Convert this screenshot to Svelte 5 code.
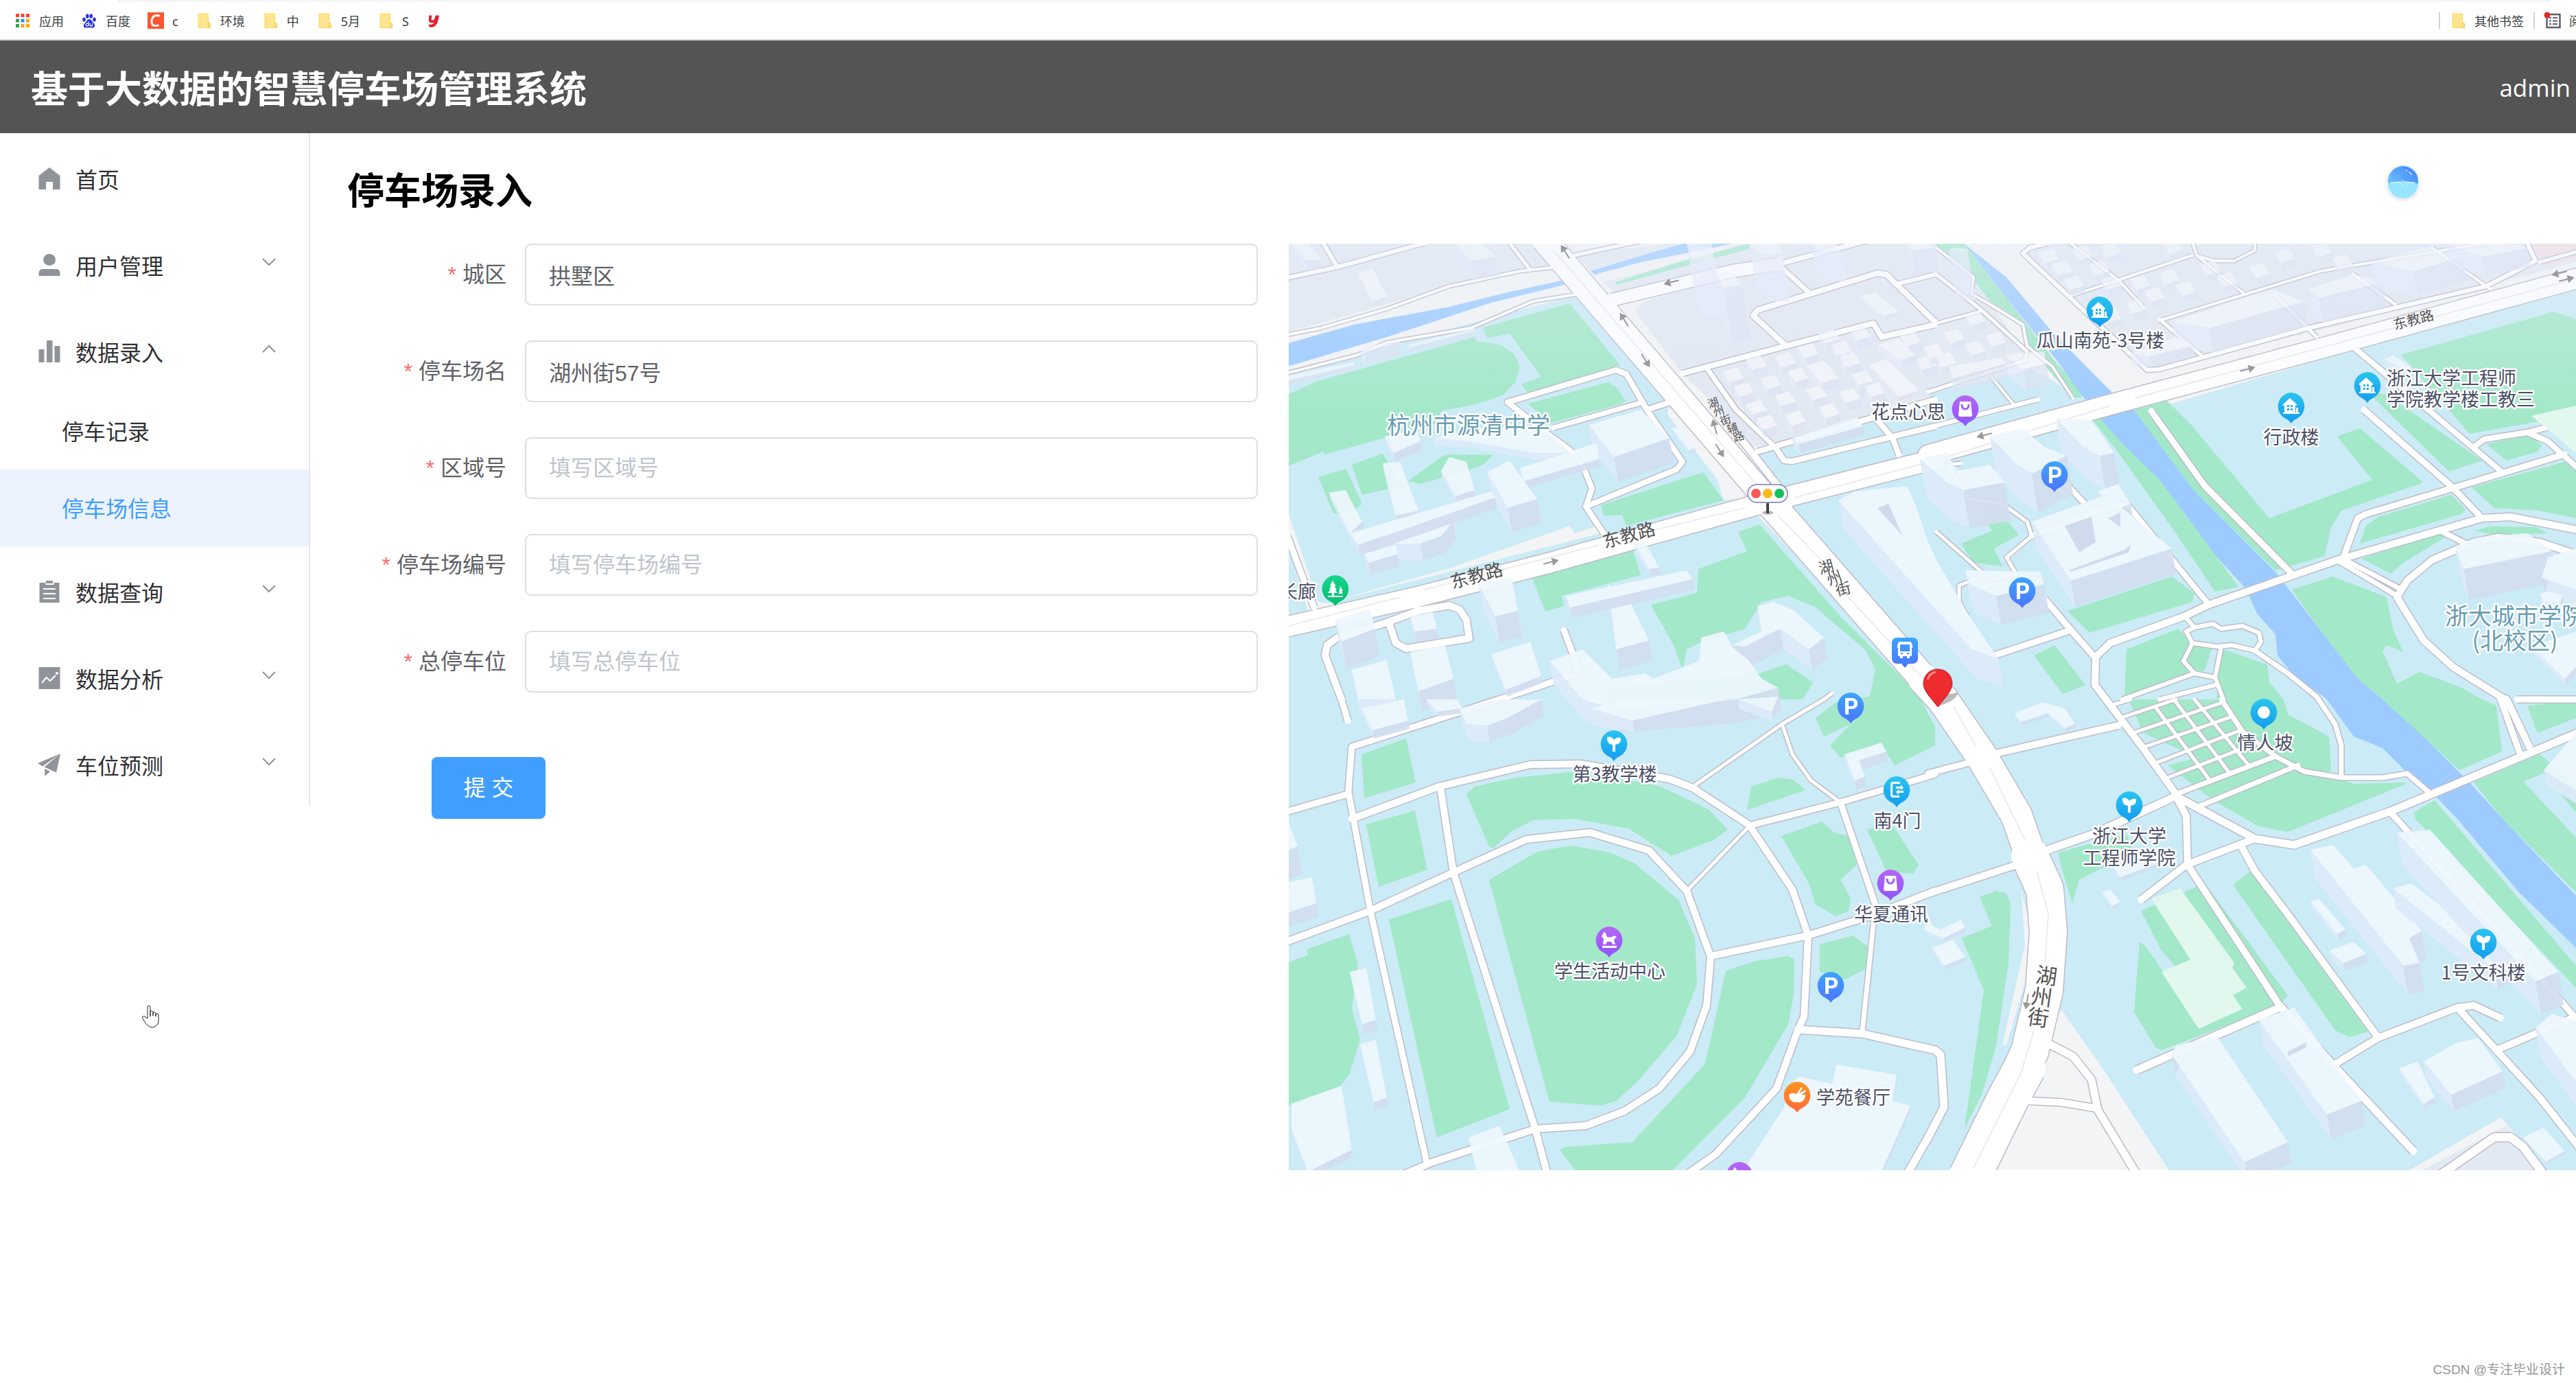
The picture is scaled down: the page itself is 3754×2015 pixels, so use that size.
<script>
  const bookmarks = [
    { icon: 'apps', label: '应用' },
    { icon: 'baidu', label: '百度' },
    { icon: 'csdn', label: 'c' },
    { icon: 'folder', label: '环境' },
    { icon: 'folder', label: '中' },
    { icon: 'folder', label: '5月' },
    { icon: 'folder', label: 'S' },
    { icon: 'youdao', label: '' },
  ];

  const menu = [
    { icon: 'home', label: '首页' },
    { icon: 'user', label: '用户管理', group: true },
    { icon: 'bars', label: '数据录入', group: true, open: true, children: ['停车记录', '停车场信息'] },
    { icon: 'order', label: '数据查询', group: true },
    { icon: 'trend', label: '数据分析', group: true },
    { icon: 'plane', label: '车位预测', group: true },
  ];
  const current = '停车场信息';

  const fields = [
    { id: 'district', label: '城区', value: '拱墅区', hint: '填写城区' },
    { id: 'name', label: '停车场名', value: '湖州街57号', hint: '填写停车场名' },
    { id: 'area', label: '区域号', value: '', hint: '填写区域号' },
    { id: 'code', label: '停车场编号', value: '', hint: '填写停车场编号' },
    { id: 'total', label: '总停车位', value: '', hint: '填写总停车位' },
  ];

  // The map is surveyed on four sheets, each with its own origin and scale.
  const sheets = {
    nw: [-8, -16, 1.6505, 2.306],
    ne: [932, -16, 1.661, 2.306],
    sw: [-8, 664, 1.6505, 2.24],
    se: [932, 664, 1.661, 2.24],
  };
  function points(text) {
    let s = sheets.nw;
    const out = [];
    for (const word of text.trim().split(/\s+/)) {
      if (sheets[word]) { s = sheets[word]; continue; }
      const [x, y] = word.split(',').map(Number);
      out.push([Math.round(s[0] + x / s[2]), Math.round(s[1] + y / s[3])]);
    }
    return out;
  }
  const join = (list) => list.map((p) => p.join(',')).join(' ');
  const line = (text) => join(points(text));
  const at = (text) => 'translate(' + points(text)[0].join(' ') + ')';

  const land = [
    'nw 0,30 ne 1568,30 1568,190 1040,390 590,575 330,560 nw 1568,590 1140,735 1180,850 1110,890 1060,900 1045,830 925,610 930,560 720,205 0,470',
    'nw 0,890 85,1240 130,1250 60,1270 0,1000',
    'nw 405,1125 690,985 700,1010 760,985 765,1010 400,1140 100,1245',
    'se 320,1010 415,1190 585,1540 160,1540 250,1300',
    'se 1160,1540 1385,1365 1500,1540',
    'nw 1140,950 1160,945 1568,1540 1568,1568',
    'se 225,620 250,760 240,900 190,1130 180,1130 235,800',
  ].map(line);
  const blocks = [
    'nw 0,30 620,30 650,105 400,180 0,340',
    'nw 845,260 870,230 1200,100 1568,30 ne 30,35 110,150 240,420 0,530 nw 1568,545 1180,710 1130,720 1010,540 960,475',
    'nw 700,70 960,35 740,130',
    'nw 770,165 960,100 1100,40 1568,30 1200,100 800,205',
    'ne 230,70 245,35 1568,35 1568,100 1330,185 940,330 560,455 520,455',
    'se 1190,1540 1400,1390 1480,1540',
  ].map(line);
  const campus = ['nw 1130,740 1568,575 ne 0,540 250,460 380,560 0,700 nw 1568,700 1200,850'].map(line);
  const greens = [
    'nw 0,550 80,500 460,350 465,365 520,375 555,405 570,450 560,500 530,545 470,575 380,600 370,640 100,745 95,735 0,790',
    'nw 480,318 690,237 810,445 590,540 572,510 620,485 545,340 490,355',
    'nw 590,575 780,502 800,520 823,565 815,575 640,640',
    'nw 85,820 150,793 190,910 170,935 150,950 120,940',
    'nw 165,780 240,742 285,850 190,880',
    'nw 300,835 380,755 400,745 505,748 480,780 450,795 330,845',
    'nw 765,915 1010,805 1060,900 825,985 815,950 770,950',
    'nw 598,1155 840,1060 860,1150 670,1220 675,1255 630,1273',
    'nw 1095,1005 1145,980 1340,1290 1540,1568 1410,1568 1425,1470 1400,1400 1330,1320 1280,1260 1215,1220 1150,1240 1110,1330 1000,1380 970,1400 960,1470 940,1390 885,1250 995,1210 998,1130 1115,1070',
    'nw 1145,1480 1210,1450 1275,1510 1250,1568 780,1568 790,1530',
    'nw 1410,1560 1530,1560 sw 1568,90 1568,150 1470,215 1440,150 1340,190 1315,150 1365,80 1300,120 1280,60 1330,10',
    'nw 800,165 960,95 1120,38 1120,55 970,110 800,175',
    'ne 0,40 85,35 190,220 300,420 380,550 350,555 240,380 220,290 150,230 100,140',
    'ne 395,625 420,620 560,830 700,1090 750,1190 695,1205 600,1010 450,720',
    'ne 490,600 575,560 640,650 825,960 1075,830 990,685 1045,658 1200,840 1000,935 975,990 960,1085 840,1135 640,860',
    'ne 1145,410 1515,265 1568,290 1568,610 1310,675',
    'ne 1060,530 1110,545 1340,765 1260,802',
    'ne 1350,710 1460,680 1485,715 1475,735 1400,765',
    'ne 1315,855 1540,770 1568,800 1568,960 1480,935 1370,925',
    'ne 1045,1045 1060,985 1090,955 1265,880 1300,930 1290,945',
    'ne 1050,1095 1235,1010 1250,1025 1150,1110 1120,1145',
    'ne 1320,1000 1360,988 1470,990 1500,1010 1370,1015',
    'ne 880,1200 980,1155 1110,1225 1125,1330 1150,1410 1110,1385 1100,1405 1135,1515 1190,1475 1290,1530 1340,1568 se 1375,20 1388,170 1285,230 1100,0 ne 1040,1500 940,1320',
    'ne 80,1045 155,1000 130,950 165,925 220,1015 160,1060 180,1120 110,1110',
    'ne 338,1270 590,1155 645,1210 640,1240 390,1345',
    'ne 255,1420 305,1385 380,1520 325,1550',
    'ne 480,1400 605,1330 640,1380 690,1385 670,1470 620,1500 475,1568',
    'ne 715,1400 820,1450 825,1510 860,1568 se 870,50 970,120 975,235 920,235 760,110 700,0 ne 700,1500',
    'se 485,0 700,0 840,190 1030,275 1160,270 1150,280 870,432 800,415 690,330 580,215 655,190 520,110',
    'se 315,500 480,440 495,500 365,590 348,665 320,540',
    'se 125,645 165,625 190,635 200,660 195,860 165,1130 130,1290 88,1400 135,950 82,780 155,740',
    'se 515,690 670,600 870,965 850,1000 565,1145 550,1135 498,1020 512,790 580,860',
    'se 738,605 780,560 1065,1085 1020,1103 985,1080',
    'se 1175,370 1225,330 1568,870 1568,940 1180,390',
    'se 1320,270 1480,180 1568,280 1568,630 1390,390',
    'se 1450,20 1568,5 1568,60 1475,110',
    'sw 188,180 295,128 318,270 195,322',
    'sw 200,408 317,362 346,555 230,612',
    'sw 255,720 405,652 545,1338 370,1430',
    'sw 0,865 60,835 58,815 158,765 180,865 165,1010 185,1110 160,1220 135,1265 0,1330',
    'sw 495,590 610,498 690,478 780,498 845,535 950,655 990,780 995,930 945,1100 850,1250 800,1310 765,1327 640,1312',
    'sw 440,310 460,285 560,255 690,238 830,265 905,283 1025,360 1070,425 1035,460 935,510 830,420 700,390 600,395 550,430 505,487 495,480',
    'sw 1115,360 1125,285 1190,255 1225,262 1258,295',
    'sw 1198,445 1295,398 1325,435 1360,445 1380,540 1340,590 1365,650 1360,690 1330,708 1280,670 1265,600',
    'sw 1405,425 1460,400 1528,540 1515,570 1450,560',
    'sw 1290,800 1370,770 1412,810 1400,880 1350,915 1290,890',
    'sw 1065,888 1130,855 1215,838 1230,850 1228,960 1215,1060 1110,1300 935,1540 705,1540 665,1470 680,1460 840,1445 1015,1190',
  ].map(line);
  const clearings = ['se 1440,268 1490,240 1568,370 1568,450', 'se 512,780 525,760 605,880 570,890'].map(line);
  const pales = [
    'se 540,650 610,615 740,860 735,875 770,940 738,965 760,1010 655,1075 565,890 635,850',
    'ne 1460,615 1568,580 1568,740',
  ].map(line);
  const waters = [
    'nw 0,375 170,310 400,250 540,200 690,155 690,170 500,235 250,350 0,455',
    'nw 740,130 880,70 960,38 1090,35 1000,60 860,100 750,140',
    'ne 85,35 190,150 300,335 450,545 500,600 640,860 840,1140 940,1320 1040,1500 1100,1568 se 1190,110 1310,270 1390,390 1568,640 1568,810 1430,630 1280,390 1210,290 1160,240 1100,160 1030,120 965,0 ne 880,1480 845,1420 840,1350 795,1280 770,1200 700,1090 560,830 470,710 390,580 310,430 190,220 100,60',
  ].map(line);

  const roads = [
    [36, 'nw 625,20 1165,900'],
    [41, 'nw 1165,900 1540,1500 se 35,0'],
    [45, 'nw 1540,1500 se 35,0 130,185 215,380 248,510'],
    [54, 'se 245,510 282,620 290,760 280,950 245,1150 195,1300'],
    [60, 'se 235,1200 195,1300 100,1560'],
    [29, 'nw -20,1332 320,1225 640,1110 1165,905 1568,760 ne 0,748 450,575 960,385 1580,150'],
    [18, 'nw 790,225 1080,130 1190,105'],
    [8, 'nw 770,1010 728,920 742,860 720,780 690,730 620,660 540,570 800,462 825,475 875,595 960,770 945,795 728,920'],
    [8, 'nw 875,595 940,565'],
    [7, 'nw 650,655 865,570'],
    [4, 'nw 0,345 90,320 250,255 400,180 570,130 660,115'],
    [4, 'nw 0,475 180,410 250,370 450,320 600,230 715,205'],
    [6, 'nw 0,155 130,115 340,35'],
    [6, 'nw 95,35 130,115'],
    [5, 'nw 545,35 595,125'],
    [8, 'nw 960,472 1210,380 1420,305 1440,350 1568,310'],
    [8, 'nw 1210,380 1130,280 1140,260 1430,135 1450,140 1568,300'],
    [7, 'nw 1190,105 1265,200'],
    [7, 'nw 1190,105 1420,20'],
    [6, 'nw 1480,170 1568,140'],
    [5, 'nw 700,75 870,25'],
    [7, 'nw 1018,455 1090,595 1175,710'],
    [8, 'nw 1140,735 1568,560'],
    [10, 'nw 1100,690 1190,850'],
    [8, 'nw 1185,725 1205,765 1225,768 1568,650'],
    [8, 'nw 1420,615 1465,690 1480,745'],
    [9, 'nw 10,1020 75,1260'],
    [10, 'nw 140,1568 100,1420 105,1385 130,1360 250,1310 325,1270 400,1253 425,1265 440,1300 448,1362 295,1398 270,1380 255,1310'],
    [10, 'nw 315,1235 325,1270'],
    [9, 'nw 675,1335 712,1470 700,1485 520,1568 sw 165,155 157,300 210,690 345,1510'],
    [9, 'nw 140,1568 sw 155,70'],
    [9, 'sw 0,370 155,308'],
    [10, 'sw 165,390 375,285 595,212 715,210 930,260 985,290 1120,410 1225,620 1262,770 1252,1035 1238,1080 1187,1270 1040,1485 975,1545'],
    [10, 'sw 378,285 410,565 605,1400 635,1550'],
    [10, 'sw -10,800 210,690 410,565 585,458 737,435 880,492 970,625 1028,840 1018,1000 978,1150 905,1270 820,1345 728,1390 605,1402 360,1510 290,1550'],
    [5, 'sw 970,625 1120,415'],
    [9, 'sw 1120,412 1340,335 1568,245 se 0,243 100,205'],
    [5, 'sw 985,285 1200,80 1300,0 nw 1320,1548'],
    [5, 'sw 1200,80 1225,180 1270,265 1340,335'],
    [9, 'sw 1340,335 1425,670'],
    [7, 'sw 1425,670 1393,1085'],
    [10, 'sw 1028,838 1262,770 1425,700 1568,625 se 0,635 215,540'],
    [11, 'sw 1238,1078 1393,1090 1568,1145 se 30,1160 38,1330 0,1430 sw 1500,1550'],
    [10, 'se 170,175 460,85'],
    [10, 'ne 405,1425 403,1520 430,1568 se 520,160 600,310'],
    [8, 'ne 680,1250 480,910 400,940 250,1020'],
    [8, 'ne 330,840 400,940'],
    [5, 'ne 20,1005 150,1165 215,1150 190,1090 250,1020 240,970 180,910 100,895 60,810 50,780 80,775'],
    [5, 'ne 130,1155 75,1185 75,1240 95,1290'],
    [9, 'ne 150,1425 345,1335'],
    [9, 'ne 280,1230 345,1335 405,1430'],
    [10, 'ne 405,1425 440,1380 620,1290 680,1250 990,1100 1340,960 1410,955 1580,1000'],
    [9, 'ne 880,1145 670,850 540,600'],
    [9, 'ne 1005,1090 1040,960 1060,945 1270,858 1540,745'],
    [9, 'ne 1055,595 1270,858 1340,960'],
    [8, 'ne 1030,385 1215,600 1385,800'],
    [8, 'ne 1325,715 1345,695 1450,670 1580,625'],
    [8, 'ne 1450,670 1500,700 1580,800'],
    [8, 'ne 1245,1005 1300,1045'],
    [10, 'ne 1580,1085 1480,1040 1380,1025 1320,1040 1220,1100 1160,1170 1135,1225 1200,1370 1270,1460 1385,1560 1400,1568 se 1455,155'],
    [7, 'ne 995,1105 1135,1220'],
    [7, 'ne 1010,1100 1140,1195'],
    [6, 'ne 625,1295 645,1325 690,1315 710,1330 760,1322 800,1345 805,1375 790,1405 735,1385 700,1390 640,1380 625,1340 645,1325'],
    [6, 'ne 640,1380 618,1440 645,1480 695,1495 710,1390'],
    [6, 'ne 695,1495 715,1568'],
    [6, 'ne 645,1480 470,1568'],
    [6, 'ne 695,1520 560,1568'],
    [7, 'ne 790,1405 870,1480 940,1560 se 985,80 1000,150 1000,250'],
    [7, 'se 1210,300 1160,243 1100,255 1000,255 910,235 840,185 760,105 710,0'],
    [7, 'se 600,310 840,185'],
    [7, 'se 655,350 895,215'],
    [5, 'se 440,20 490,0'], [5, 'se 465,60 600,0'], [5, 'se 495,110 715,10'], [5, 'se 525,155 735,55'],
    [5, 'se 545,210 755,100'], [5, 'se 580,255 780,150'], [5, 'se 550,25 680,260'], [5, 'se 595,0 730,240'], [5, 'se 645,0 775,215'],
    [11, 'se 280,495 400,440 600,315 790,455 885,475 1120,365 1580,105'],
    [10, 'se 600,315 625,380 628,540 850,1000'],
    [10, 'se 515,655 625,540 790,455'],
    [11, 'se 850,1000 980,1195 1175,1475'],
    [11, 'se 505,1210 850,1005'],
    [10, 'se 760,485 790,560 870,700 1090,1105'],
    [10, 'se 980,1195 1090,1105 1280,1005 1320,1000 1385,1040'],
    [10, 'se 1280,1005 1375,1145 1480,1300 1580,1470'],
    [10, 'se 1375,1145 1568,1035'],
    [9, 'se 1120,370 1470,890 1580,1060'],
    [9, 'se 1385,0 1432,175'],
    [9, 'se 1425,0 1580,0'],
    [11, 'se 285,1120 350,1165 395,1240 410,1340 505,1550'],
    [10, 'se 245,1310 320,1315 410,1335'],
    [12, 'se 1240,1550 1370,1430 1410,1430 1440,1460 1490,1550'],
    [6, 'ne 290,35 245,50 230,70 340,215 530,462 560,460 920,320 1350,180 1470,95 1450,35'],
    [4, 'ne 340,215 460,160 640,75'],
    [4, 'ne 330,20 460,160 520,250'],
    [4, 'ne 640,30 650,75 690,95 740,95 790,60 790,20'],
    [6, 'ne 0,655 265,560'],
    [5, 'ne 0,535 235,430 240,400 130,260 20,140'],
    [4, 'ne 20,305 130,262'],
    [4, 'ne 20,50 110,150 105,205 160,250 230,310 240,380 300,450 350,555'],
    [5, 'ne 560,290 660,410'], [4, 'ne 650,75 760,200'], [5, 'ne 840,210 940,350'], [5, 'ne 1030,140 1130,240'],
    [4, 'ne 1220,50 1360,190'], [4, 'ne 560,295 950,130 1350,35'], [4, 'ne 150,480 210,580'], [5, 'ne 1480,100 1580,60'],
  ].map(([w, p]) => ({ w, d: line(p) }));
  const centres = [
    'nw 650,60 1150,865',
    'nw 1190,950 1300,1110', 'nw 1350,1210 1540,1500',
    'se 60,20 115,150', 'se 150,225 235,460', 'se 262,560 290,700 282,860', 'se 255,1080 225,1220 110,1530',
    'nw 0,1325 280,1225', 'nw 340,1200 760,1050', 'nw 860,1010 1110,925', 'nw 1230,890 1568,765 ne 440,580', 'ne 500,555 1568,155',
  ].map(line);

  const house = (sheet, x, y) =>
    `${sheet} ${x - 22},${y - 14} ${x + 12},${y - 28} ${x + 28},${y + 8} ${x - 6},${y + 22}`;
  const homes = [
    ...[[1080,480],[1105,530],[1135,590],[1160,640],[1135,440],[1170,505],[1205,560],[1230,625],[1205,430],[1235,480],[1260,400],[1310,350],[1340,390],[1360,430],[1385,340],[1390,490],[1420,530],[1360,550],[1280,540],[1310,600],[1505,360],[1545,440]].map(([x, y]) => [12, house('nw', x, y)]),
    ...[[290,80],[320,120],[350,170],[370,70],[410,120],[440,170],[440,60],[510,170],[545,210],[500,250],[580,150],[620,190],[590,50],[680,120],[720,160],[800,130],[860,80],[950,60],[1000,100],[110,290],[60,350],[110,390],[10,400],[40,430],[160,360],[440,280]].map(([x, y]) => [10, house('ne', x, y)]),
  ];
  function extrude([drop, text], far = false) {
    const roof = points(text);
    const lean = Math.round(drop / 6);
    const walls = roof.map((a, i) => {
      const b = roof[(i + 1) % roof.length];
      const slope = (b[0] - a[0]) * (b[1] - a[1]);
      return { dark: slope < 0, d: join([a, b, [b[0] + lean, b[1] + drop], [a[0] + lean, a[1] + drop]]) };
    });
    return { roof: join(roof), walls, far };
  }
  const buildings = [
    ...homes.map((b) => extrude(b, true)),
    ...[
      [80, 'nw 1035,115 1085,140 1105,175 1060,185'], [85, 'nw 970,35 1030,35 1035,90 985,90'],
      [70, 'nw 1120,35 1190,35 1200,70 1150,70'], [45, 'nw 1270,35 1330,35 1340,60 1290,60'],
      [35, 'nw 1500,35 1568,35 1568,50 1510,60'], [28, 'nw 415,35 480,35 510,80 450,95'],
      [5, 'nw 180,135 215,120 250,215 215,230'], [14, 'nw 20,35 60,35 90,90 55,95'],
      [6, 'nw 1385,215 1425,200 1480,265 1445,280'], [18, 'nw 185,390 270,360 280,370 195,400'],
      [7, 'nw 300,375 460,320 460,330 305,385'], [7, 'nw 0,485 165,435 172,445 0,500'],
      [12, 'nw 1430,375 1480,355 1520,410 1485,430'], [12, 'nw 1258,445 1300,430 1335,490 1295,505'],
      [6, 'nw 1410,445 1450,425 1530,530 1480,550'],
      [36, 'ne 590,300 830,190 910,230 680,320'], [36, 'ne 920,190 1030,140 1100,165 945,220'],
      [35, 'ne 1070,100 1200,50 1295,80 1175,130'], [28, 'ne 1250,35 1400,35 1450,50 1340,80'],
      [16, 'ne 490,405 600,350 640,380 535,415'], [70, 'ne 50,60 60,50 95,55 95,65'],
      [30, 'ne 185,410 280,400 285,440 230,460'], [20, 'ne 50,450 180,420 190,440 60,490'],
    ].map((b) => extrude(b, true)),
    ...[
      [5, 'nw 935,655 955,655 990,725 975,730'], [10, 'nw 360,690 500,650 640,670 690,740 600,740 450,700'],
      [36, 'nw 735,645 860,595 930,690 795,755'], [10, 'nw 570,790 755,705 760,760 580,835'],
      [35, 'nw 490,805 545,765 610,895 540,925'], [10, 'nw 380,800 400,755 440,770 460,865 415,885'],
      [14, 'nw 240,775 280,770 325,935 270,950'], [13, 'nw 245,685 320,660 330,700 265,740'],
      [10, 'nw 110,875 150,865 190,970 160,1010'], [25, 'nw 230,1015 410,935 410,970 380,1020 330,1045 270,1045'],
      [15, 'nw 160,1010 500,870 510,890 180,1050'], [18, 'nw 195,1080 270,1050 275,1080 205,1110'],
      [38, 'nw 470,1180 550,1160 565,1270 510,1290'], [15, 'nw 305,1290 360,1275 370,1330 315,1340'],
      [40, 'nw 125,1300 210,1265 220,1330 140,1375'], [30, 'nw 780,1180 830,1230 880,1370 800,1400'],
      [15, 'nw 680,1220 970,1135 985,1165 690,1260'], [10, 'nw 845,1045 870,1040 905,1125 880,1130'],
      [10, 'nw 500,1415 595,1375 620,1490 535,1535'], [30, 'nw 305,1410 390,1385 410,1500 325,1540'],
      [20, 'nw 165,1470 250,1435 270,1568 180,1568'],
      [30, 'nw 1140,1255 1180,1240 1230,1270 1300,1360 1265,1400 1195,1330 1110,1390 1080,1385 1150,1340'],
      [34, 'nw 640,1440 720,1400 790,1500 870,1480 890,1500 1000,1440 1005,1360 1060,1340 1080,1390 1120,1440 1150,1500 1190,1530 1090,1568 800,1600 720,1568'],
      [13, 'nw 1225,690 1380,620 1395,650 1240,710'],
      [42, 'nw 1335,900 1375,870 1500,850 1520,910 ne 0,1040 20,1100 100,1290 170,1430 105,1400'],
      [50, 'ne 310,625 395,630 450,740 415,750 375,720'], [56, 'ne 150,685 230,660 280,720 335,750 250,810 215,780'],
      [56, 'ne -20,760 45,740 70,800 150,780 185,840 85,865 45,840'], [20, 'ne 410,870 460,845 490,910 455,930'],
      [38, 'ne 250,970 430,880 590,1060 345,1170'], [42, 'ne 90,1135 270,1140 280,1180 165,1220 100,1180'],
      [45, 'ne 1275,1060 1330,1025 1450,1010 1510,1070 1295,1130'], [25, 'ne 1500,1090 1568,1060 1568,1200 1485,1160'],
      [12, 'ne 1480,1210 1500,1205 1535,1220 1530,1240 1490,1240'], [10, 'ne 1460,1390 1568,1340 1568,1460 1540,1500'],
      [8, 'ne 1105,425 1125,413 1170,450 1150,462'],
      [5, 'se 210,45 275,10 330,30 355,80 330,95 290,45 225,75'], [5, 'se 450,550 515,510 555,535 465,580'],
      [4, 'se 420,630 440,620 465,660 445,675'], [6, 'se 10,810 60,785 90,840 38,870'],
      [5, 'se -10,670 10,740 30,750 80,720 90,745 35,780 -10,750'],
      [42, 'se 925,490 980,475 1030,550 1060,540 1195,755 1165,780 1190,860 1150,870'],
      [30, 'se 1125,615 1170,600 1410,850 1370,880'], [48, 'se 1135,435 1215,425 1525,890 1470,920'],
      [9, 'se 925,660 945,650 1010,750 990,765'], [12, 'se 970,820 1030,790 1060,830 1005,860'],
      [20, 'se 1490,230 1568,110 1568,300'], [30, 'se 600,1130 700,1100 870,1445 765,1510 590,1160'],
      [36, 'se 800,1045 885,1005 1048,1310 965,1355'], [7, 'se 1140,1205 1185,1180 1225,1300 1200,1320'],
      [24, 'se 1200,1180 1280,1120 1330,1105 1390,1215 1265,1290'], [3, 'se 1440,1430 1490,1398 1540,1475 1495,1510'],
      [45, 'se 1470,1070 1510,1025 1568,1050 1568,1250'],
      [5, 'sw 1225,1250 1240,1230 1320,1255 1330,1192 1475,1225 1465,1310 1508,1325 1440,1540 1105,1540 1205,1330'],
      [12, 'sw 188,30 290,0 300,70 215,100'], [7, 'sw 345,0 420,0 430,30 370,40'],
      [24, 'sw 425,30 530,0 620,0 540,60 490,85 440,80'], [18, 'sw 740,30 830,0 1080,0 1035,10 840,70'],
      [14, 'sw 1095,0 1190,-10 1175,40'], [15, 'sw 160,890 200,875 222,1045 190,1060'],
      [12, 'sw 185,1125 222,1110 250,1300 218,1315'], [10, 'sw 20,1320 140,1262 165,1470 60,1540 20,1400'],
      [5, 'sw 445,1430 520,1390 570,1540 465,1540'], [40, 'sw 0,400 10,390 35,480 0,500'],
      [20, 'sw 0,600 70,580 80,665 0,700'], [14, 'sw 1350,180 1440,140 1450,170 1385,200 1400,250 1375,265'],
    ].map((b) => extrude(b)),
  ];
  const courts = [
    'ne 330,985 395,955 405,1040 365,1075', 'ne 340,1135 475,1065 490,1050 485,1075 345,1140',
    'ne 435,960 465,940 465,990', 'se 870,1150 915,1120 915,1135 870,1165', 'nw 1430,925 1455,910 1490,1020',
  ].map(line);

  const pins = [
    ['park', 'nw 126,1197', 'g'], ['bag', 'ne 90,593', 'v'], ['hall', 'ne 416,260', 'c'], ['hall', 'ne 1063,515', 'c'],
    ['hall', 'ne 878,584', 'c'], ['parking', 'ne 305,814', 'b'], ['parking', 'ne 227,1204', 'b'], ['parking', 'sw 1365,22', 'b'],
    ['parking', 'sw 1317,934', 'b'], ['sprout', 'sw 795,146', 'c'], ['sprout', 'se 487,345', 'c'], ['sprout', 'se 1343,793', 'c'],
    ['gate', 'sw 1476,296', 'c'], ['bag', 'sw 1460,600', 'v'], ['horse', 'sw 784,786', 'v'], ['dot', 'se 813,42', 'c'],
    ['food', 'sw 1236,1292', 'o'], ['horse', 'sw 1097,1555', 'v'],
  ];
  const places = [
    ['花点心思', 'ne 42,602', 'end'], ['瓜山南苑-3号楼', 'ne 417,363', 'middle'],
    ['浙江大学工程师', 'ne 1110,488', 'start'], ['学院教学楼工教三', 'ne 1110,560', 'start'],
    ['行政楼', 'ne 878,687', 'middle'], ['第3教学楼', 'sw 797,245', 'middle'], ['南4门', 'sw 1478,396', 'middle'],
    ['华夏通讯', 'sw 1462,701', 'middle'], ['学生活动中心', 'sw 785,886', 'middle'], ['学苑餐厅', 'sw 1283,1300', 'start'],
    ['情人坡', 'se 815,142', 'middle'], ['浙江大学', 'se 487,445', 'middle'], ['工程师学院', 'se 487,517', 'middle'],
    ['1号文科楼', 'se 1344,892', 'middle'], ['长廊', 'nw 79,1207', 'end'],
  ];
  const regions = [
    ['杭州市源清中学', 'nw 446,648', 'middle'], ['浙大城市学院', 'ne 1250,1288', 'start'], ['(北校区)', 'ne 1420,1371', 'middle'],
  ];
  const streets = [
    ['东教路', 'nw 465,1155', -15, 'm'], ['东教路', 'nw 832,1020', -15, 'm'], ['东教路', 'ne 1175,290', -15, 's'],
    ['湖', 'nw 1305,1123', -15, 'n'], ['州', 'nw 1325,1160', -20, 'n'], ['街', 'nw 1346,1197', -15, 'n'],
    ['湖', 'se 285,910', 8, 'l'], ['州', 'se 274,978', 8, 'l'], ['街', 'se 265,1045', 8, 'l'],
    ['湖', 'nw 1033,568', -18, 't'], ['州', 'nw 1047,596', -18, 't'], ['街', 'nw 1063,625', -18, 't'],
    ['辅', 'nw 1079,653', -18, 't'], ['路', 'nw 1094,681', -18, 't'],
  ];
  const arrows = [
    ['nw 643,1106', -14], ['ne 773,460', -14], ['ne 137,680', 166], ['nw 871,430', 58], ['nw 820,292', -122],
    ['nw 1038,652', -105], ['nw 1049,732', 58], ['nw 678,65', -122], ['nw 935,165', 166], ['ne 1545,157', -14], ['ne 1528,136', 166],
    ['se 240,985', 100],
  ];
</script>

{#snippet folder()}
  <svg class="mark" viewBox="0 0 24 24" aria-hidden="true">
    <path d="M4 2h14.500v16h2.500v4.500H4z" fill="#ffe591" stroke="#fbd94c" />
    <path d="M18.500 22v-4.500q0-2 1.500-2t1.500 2V22z" fill="#ffe591" stroke="#eec63c" />
  </svg>
{/snippet}

<div class="page">
  <nav class="bookmarks" aria-label="书签">
    <div class="omnibox"></div>
    <div class="bookmark-row">
      <div class="marks">
        {#each bookmarks as b}
          <a href="#bookmark" aria-label={b.label || 'youdao'}>
            {#if b.icon === 'folder'}
              {@render folder()}
            {:else}
              <svg class="mark" viewBox="0 0 24 24" aria-hidden="true">
                {#if b.icon === 'apps'}
                  <path d="M2 2h5v5H2zM9.500 2h5v5h-5zM17 2h5v5h-5z" fill="#ff4131" />
                  <path d="M2 9.500h5v5H2zM2 17h5v5H2z" fill="#34a05a" />
                  <path d="M9.500 9.500h5v5h-5z" fill="#2b8cff" />
                  <path d="M17 9.500h5v5h-5zM9.500 17h5v5h-5zM17 17h5v5h-5z" fill="#fba700" />
                {:else if b.icon === 'baidu'}
                  <g fill="#2932e1">
                    <ellipse cx="4.500" cy="10.500" rx="2.300" ry="3" /><ellipse cx="9.300" cy="5.500" rx="2.300" ry="3.300" />
                    <ellipse cx="14.700" cy="5.500" rx="2.300" ry="3.300" /><ellipse cx="19.500" cy="10.500" rx="2.300" ry="3" />
                    <path d="M12 10c3 0 4 3.500 6 5.200 4 3.300 2 8-2 7.300-3-.5-5-.5-8 0-4 .7-6-4-2-7.300C8 13.500 9 10 12 10z" />
                  </g>
                  <path d="M11 13.500v6.500M11 17.500a2 2 0 1 0 0 1M13.300 16v3q.2 1.300 1.800 1h1.300v-4" fill="none" stroke="#fff" stroke-width="1.200" />
                {:else if b.icon === 'csdn'}
                  <path d="M0 0h24v24H0z" fill="#fc5531" />
                  <path d="M18 5.500q-2-1-4.500-1c-5 0-7 3.500-7.500 8-.4 4.500 1.500 7 6 7q2.500 0 4.500-1" fill="none" stroke="#fff" stroke-width="3" />
                {:else}
                  <path d="M4 4.500h4.500c-1 5-1.500 7 .5 7 3 0 4-3 4.500-7H19c-1.500 8-2.500 13-7 16-2.500 1.500-5.500 1.500-8 .5v-3.500c3 .8 6 .5 7.500-3-4 2-8.500.5-7.500-4.500z" fill="#e8202a" />
                {/if}
              </svg>
            {/if}
            {#if b.label}<span>{b.label}</span>{/if}
          </a>
        {/each}
      </div>
      <div class="marks other">
        <i class="rule"></i>
        <a href="#other">{@render folder()}<span>其他书签</span></a>
        <i class="rule"></i>
        <a href="#reading">
          <svg class="mark" viewBox="0 0 24 24" aria-hidden="true">
            <path d="M3.500 3h19v19h-19z" fill="#fff" stroke="#5f6368" stroke-width="2.500" />
            <path d="M7 8h3M7 12.500h3M7 17h3M12 8h7M12 12.500h7M12 17h7" stroke="#5f6368" stroke-width="2.200" />
            <circle cx="4" cy="4" r="4.500" fill="#d93025" />
          </svg>
          <span>阅读清单</span>
        </a>
      </div>
    </div>
  </nav>

  <header class="top">
    <h1>基于大数据的智慧停车场管理系统</h1>
    <span class="who">admin</span>
  </header>

  <div class="body">
    <aside>
      <ul class="menu">
        {#each menu as m}
          <li>
            <button type="button" class="entry" aria-expanded={m.group ? !!m.open : undefined}>
              <svg class="glyph" viewBox="0 0 32 32" aria-hidden="true">
                {#if m.icon === 'home'}
                  <path d="M16 0 31.500 12v20H21V21H11v11H.500V12z" />
                {:else if m.icon === 'user'}
                  <ellipse cx="16" cy="8.500" rx="9" ry="8.500" /><path d="M.500 32v-4q0-6 6-6h19q6 0 6 6v4z" />
                {:else if m.icon === 'bars'}
                  <path d="M.500 13h8v19h-8zM12 0h8.500v32H12zM23.500 8h8v24h-8z" />
                {:else if m.icon === 'order'}
                  <path fill-rule="evenodd" d="M1.500 3h9v3h12V3h8v29h-29zM7 11v2h18v-2zM7 18v2h18v-2zM7 25v2h18v-2z" /><path d="M11 0h10v4H11z" />
                {:else if m.icon === 'trend'}
                  <path d="M.500 0h31v32H.500z" /><path d="m5 23 6.500-8 5.500 5 8-8" fill="none" stroke="#fff" stroke-width="2" /><ellipse cx="27" cy="9" rx="2.200" ry="2" fill="#fff" />
                {:else}
                  <path d="M32 0-1 14l7 4.500zM32 0 8.500 19.500l17.500 8zM9 22l8 4-7.500 7z" />
                {/if}
              </svg>
              <span>{m.label}</span>
              {#if m.group}
                <svg class="fold" viewBox="0 0 20 12" aria-hidden="true">
                  <path d={m.open ? 'm1 11 9-9 9 9' : 'm1 1 9 9 9-9'} />
                </svg>
              {/if}
            </button>
            {#if m.children}
              <ul>
                {#each m.children as c}
                  <li><a href="#menu" class="sub" class:active={c === current}>{c}</a></li>
                {/each}
              </ul>
            {/if}
          </li>
        {/each}
      </ul>
    </aside>

    <main>
      <h2>停车场录入</h2>
      <div class="columns">
        <form onsubmit={(e) => e.preventDefault()}>
          {#each fields as f}
            <div class="field">
              <label for={f.id}><b>*</b>{f.label}</label>
              <input id={f.id} type="text" value={f.value} placeholder={f.hint} />
            </div>
          {/each}
          <button type="submit" class="submit">提 交</button>
        </form>

        <svg class="map" viewBox="0 0 1876 1350" role="img" aria-label="地图">
          <defs>
            <linearGradient id="pin-b" x2="0" y2="1"><stop stop-color="#3da5ff" /><stop offset="1" stop-color="#4d74ff" /></linearGradient>
            <linearGradient id="pin-c" x2="0" y2="1"><stop stop-color="#2ac4ee" /><stop offset="1" stop-color="#149cf0" /></linearGradient>
            <linearGradient id="pin-v" x2="0" y2="1"><stop stop-color="#b566f5" /><stop offset="1" stop-color="#8f55ff" /></linearGradient>
            <linearGradient id="pin-g" x2="0" y2="1"><stop stop-color="#16d68c" /><stop offset="1" stop-color="#02bd6f" /></linearGradient>
            <linearGradient id="pin-o" x2="0" y2="1"><stop stop-color="#ff9422" /><stop offset="1" stop-color="#ff6b38" /></linearGradient>
            <linearGradient id="haze" x2="0" y2="1"><stop stop-color="#e6edfa" stop-opacity="0.400" /><stop offset="1" stop-color="#e6edfa" stop-opacity="0" /></linearGradient>
          </defs>
          <rect width="1876" height="1350" fill="#cbebf6" />
          {#each land as d}<polygon points={d} fill="#f3f4f5" />{/each}
          {#each blocks as d}<polygon points={d} fill="#e3e9f2" />{/each}
          {#each campus as d}<polygon points={d} fill="#cbebf6" />{/each}
          {#each greens as d}<polygon points={d} fill="#a3e8c8" />{/each}
          {#each clearings as d}<polygon points={d} fill="#cbebf6" />{/each}
          {#each waters as d}<polygon points={d} fill="#9dcbff" />{/each}
          <polygon points={line('ne 1450,35 1568,35 1568,90 1500,110')} fill="#f6dfe4" />
          <g fill="none" stroke="#bdbcc8" stroke-linejoin="round">
            {#each roads as r}<polyline points={r.d} stroke-width={r.w + 3} />{/each}
          </g>
          <g fill="none" stroke="#fff" stroke-linejoin="round" stroke-linecap="round">
            {#each roads as r}<polyline points={r.d} stroke-width={r.w} />{/each}
          </g>
          <g fill="none" stroke="#ececef" stroke-width="2">
            {#each centres as d}<polyline points={d} />{/each}
          </g>
          {#each pales as d}<polygon points={d} fill="#e2f8ee" />{/each}
          {#each buildings as b}
            <g opacity={b.far ? 0.7 : 0.92}>
              {#each b.walls as w}<polygon points={w.d} fill={w.dark ? (b.far ? '#dce3f2' : '#d3dff0') : (b.far ? '#e6ecfb' : '#deebfa')} />{/each}
              <polygon points={b.roof} fill={b.far ? '#f7f9fd' : '#eef8fe'} />
            </g>
          {/each}
          {#each courts as d}<polygon points={d} fill="#cfdbed" />{/each}
          <rect width="1876" height="260" fill="url(#haze)" />

          {#each arrows as [p, turn]}
            <g transform={at(p)}><path transform="rotate({turn})" d="M-11-1H2v-5L12 0 2 6V1h-13z" fill="#9a9a9d" /></g>
          {/each}
          {#each streets as [name, p, turn, size]}
            <g transform={at(p)}><text class="street {size}" transform="rotate({turn})" text-anchor="middle" dy="8">{name}</text></g>
          {/each}

          <g transform="translate(698 364)">
            <ellipse cy="28" rx="8" ry="3" fill="#b8b8bc" />
            <path d="M-2 13h4v16h-4z" fill="#444" />
            <rect x="-29" y="-13" width="58" height="26" rx="13" fill="#fff" stroke="#9a9ac4" stroke-width="2" />
            <circle cx="-17" r="7" fill="#fb5a55" /><circle r="7" fill="#fbb91c" /><circle cx="17" r="7" fill="#14c25c" />
          </g>
          <g transform={at('nw 1495,1406')}>
            <path d="M-11-20h22q8 0 8 8v22q0 8-8 8H5l-5 6-5-6h-6q-8 0-8-8v-22q0-8 8-8z" fill="url(#pin-b)" />
            <path fill-rule="evenodd" d="M-7-14H7q3 0 3 4h1v5h-1V7H7v3H3V7h-6v3h-4V7h-3V-5h-1v-5h1q0-4 3-4zM-7-10V0H7v-10zM-6 2v2h3V2zM3 2v2h3V2z" fill="#fff" />
          </g>

          {#each pins as [kind, p, tone]}
            <g transform={at(p)}>
              <path d="M0-20a20 20 0 0 1 8 38Q3 20 0 25q-3-5-8-7a20 20 0 0 1 8-38z" fill="url(#pin-{tone})" />
              <g fill="#fff">
                {#if kind === 'parking'}
                  <path fill-rule="evenodd" d="M-8-12H1Q10-12 10-4T1 4h-4v8h-5zM-3-8V0h4q4 0 4-4t-4-4z" />
                {:else if kind === 'hall'}
                  <path d="M-12-3-2-12 8-3v2H6V9h1V2h3v7h2v2h-24V9h2V-1h-2z" />
                  <path d="M-6-2h3v3h-3zM-1-2h3v3h-3zM-6 3h3v3h-3zM-1 3h3v3h-3z" fill="#1fb3ef" />
                {:else if kind === 'bag'}
                  <path d="M-8-11H8l2 20q0 2-2 2H-8q-2 0-2-2z" />
                  <path d="M-5-7q0 7 5 7t5-7" fill="none" stroke="#a35ff9" stroke-width="3" />
                {:else if kind === 'sprout'}
                  <path d="M-10-10q7-2 10 4 4-5 10-3 1 9-8 10v10h-4V1q-9-1-8-11z" />
                {:else if kind === 'gate'}
                  <path d="M5-12H-5q-4 0-4 4V7q0 4 4 4H4V8h-8q-2 0-2-2V-7q0-2 2-2h9z" />
                  <path d="M-1-5h7v-3l4 5-4 3v-2h-7zM10 4H3v3l-4-4 4-4v2h7z" />
                {:else if kind === 'horse'}
                  <path d="M-11-6q2-2 3-6 4 0 4 6 3 3 8 1 3-3 7 0l-3 3-1 2 2 6H5L3 2h-6l-2 4h-4l1-8zM-10 8h21v3h-21z" />
                {:else if kind === 'dot'}
                  <circle r="9" />
                {:else if kind === 'food'}
                  <path d="M-12-1q5-4 11-1l7-10 2 1-5 8L12-8l1 2-7 5h6q0 8-7 11h-10q-7-3-7-11z" />
                {:else}
                  <path d="m-4-12 5 8h-2l3 6h-2l3 4h-5v4H11v2h-22v-2h6V6h-6l4-5h-2l3-6h-2zM7-4l4 7H9l2 4H5z" />
                {/if}
              </g>
            </g>
          {/each}

          <g transform="translate(946 641)">
            <path d="m0 33 12-17 17-3q-1 12-29 20z" fill="#777" opacity="0.500" />
            <path d="M0-21c12 0 21 9 21 21 0 11-12 22-21 34C-9 22-21 11-21 0c0-12 9-21 21-21z" fill="#ee2b2e" stroke="#c71d2c" />
            <path d="M-15-6q3-9 12-11" fill="none" stroke="#f58a88" stroke-width="3" />
          </g>

          {#each regions as [name, p, anchor]}
            <g transform={at(p)}><text class="region" text-anchor={anchor} dy="12">{name}</text></g>
          {/each}
          {#each places as [name, p, anchor]}
            <g transform={at(p)}><text class="place" text-anchor={anchor} dy="10">{name}</text></g>
          {/each}
        </svg>
      </div>
    </main>
  </div>

  <svg class="orb" viewBox="0 0 50 50" aria-hidden="true">
    <defs><linearGradient id="orb" x1="0" x2="1" y1="1" y2="0"><stop stop-color="#7fd0ff" /><stop offset="1" stop-color="#3a83fb" /></linearGradient></defs>
    <circle cx="25" cy="25" r="23" fill="#fff" stroke="#e6effa" stroke-width="2" />
    <circle cx="25" cy="25" r="22" fill="url(#orb)" />
    <path d="M3 28q11-3 22-3t22 4A22 22 0 0 1 3 28z" fill="#98e5ff" />
    <path d="M7 27h7m1 0h7m5 0h7m1 0h7M24.500 23v2m0 4v2" stroke="#fff" />
    <path d="m29 9 2 1m2 1 5 5" stroke="#cfe6ff" stroke-width="1.500" />
  </svg>
  <svg class="hand" viewBox="0 0 26 34" aria-hidden="true">
    <path d="M9 20V4q0-3 2-3t2 3v13-8q3-1 4 1v6-5q3-1 4 1v5-4q4-1 4 1v9q0 6-4 8-4 3-9 1Q6 29 2 20q-2-4 3-3z" />
  </svg>
  <p class="watermark">CSDN @专注毕业设计</p>
</div>

<style>
  :global(body) { margin: 0; background: #fff; }
  .page {
    position: relative;
    min-height: 100vh;
    overflow: hidden;
    font-family: "Noto Sans CJK SC", sans-serif;
    color: #303133;
  }
  a { color: inherit; text-decoration: none; }
  ul { list-style: none; margin: 0; padding: 0; }
  button { border: 0; background: none; font: inherit; color: inherit; }

  .bookmarks { border-bottom: 2px solid #d4d5d6; }
  .omnibox { height: 3px; margin: 0 38px 0 172px; border-radius: 0 0 8px 8px; background: #f1f3f4; }
  .bookmark-row { display: flex; justify-content: space-between; height: 54px; }
  .marks { display: flex; align-items: center; gap: 25px; padding-left: 21px; font: 18px/24px "Noto Sans", "Noto Sans CJK SC", sans-serif; color: #3c4043; white-space: nowrap; }
  .marks a { display: flex; align-items: center; gap: 12px; }
  .marks span { padding-top: 2px; }
  .mark { flex: none; width: 24px; height: 24px; overflow: visible; }
  .other { flex: none; width: 200px; padding: 0; gap: 14px; overflow: hidden; }
  .rule { flex: none; width: 2px; height: 24px; background: #cfd1d4; }

  .top { display: flex; align-items: center; justify-content: space-between; height: 135px; padding: 0 8px 0 45px; background: #545454; color: #fff; }
  h1, h2 { margin: 0; font-size: 54px; line-height: 80px; font-weight: 700; }
  .who { padding-top: 2px; font: 35px/48px "Open Sans", sans-serif; }

  .body { display: flex; align-items: flex-start; }
  aside { flex: none; width: 450px; border-right: 2px solid #e6e6e6; }
  .menu { font-size: 32px; line-height: 48px; }
  .entry { display: flex; align-items: center; width: 100%; height: 126px; padding: 6px 48px 0 56px; text-align: left; cursor: pointer; }
  .glyph { flex: none; width: 32px; height: 32px; margin-right: 22px; fill: #909399; overflow: visible; }
  .fold { width: 20px; height: 12px; margin: 0 0 8px auto; fill: none; stroke: #909399; stroke-width: 2; }
  .sub { display: block; height: 112px; padding-left: 90px; line-height: 110px; }
  .active { background: #ecf3ff; color: #409eff; }

  main { flex: 1; min-width: 0; padding-left: 54px; }
  h2 { padding: 41px 0 40px; color: #000; }
  .columns { display: grid; grid-template-columns: minmax(0, 1327fr) minmax(0, 1876fr); column-gap: 45px; align-items: start; }
  form { display: flex; flex-direction: column; gap: 51px; font: 32px/48px "Liberation Sans", "Noto Sans CJK SC", sans-serif; }
  .field { display: grid; grid-template-columns: 232px minmax(0, 1fr); column-gap: 27px; align-items: center; }
  label { text-align: right; white-space: nowrap; color: #606266; }
  label b { margin-right: 9px; font-weight: 400; color: #f56c6c; }
  input { box-sizing: border-box; width: 100%; height: 90px; padding: 0 33px; border: 2px solid #dcdfe6; border-radius: 9px; background: #fff; font: inherit; color: #606266; outline: 0; }
  input::placeholder { color: #c0c4cc; opacity: 1; }
  .submit { width: 166px; height: 90px; margin: 43px 0 0 123px; border-radius: 8px; background: #409eff; color: #fff; cursor: pointer; }

  .map { display: block; width: 100%; height: auto; }
  .map text { font-family: "Noto Sans CJK SC", sans-serif; }
  .place { font-size: 27px; fill: #4b5068; stroke: #fff; stroke-width: 5px; stroke-linejoin: round; paint-order: stroke; }
  .region { font-size: 34px; fill: #6a9db3; stroke: #fff; stroke-width: 5px; stroke-linejoin: round; paint-order: stroke; }
  .street { fill: #555; }
  .t { font-size: 16px; }
  .s { font-size: 20px; }
  .n { font-size: 22px; }
  .m { font-size: 26px; }
  .l { font-size: 31px; }

  .orb { position: absolute; top: 239px; right: 227px; width: 50px; height: 50px; border-radius: 50%; box-shadow: 0 3px 5px #0000001c; }
  .hand { position: absolute; top: 1464px; left: 206px; width: 26px; height: 34px; fill: #fff; stroke: #25252f; stroke-width: 1; }
  .watermark { position: absolute; right: 16px; bottom: 4px; margin: 0; font: 19px/30px "Liberation Sans", "Noto Sans CJK SC", sans-serif; color: #969696; }
</style>
